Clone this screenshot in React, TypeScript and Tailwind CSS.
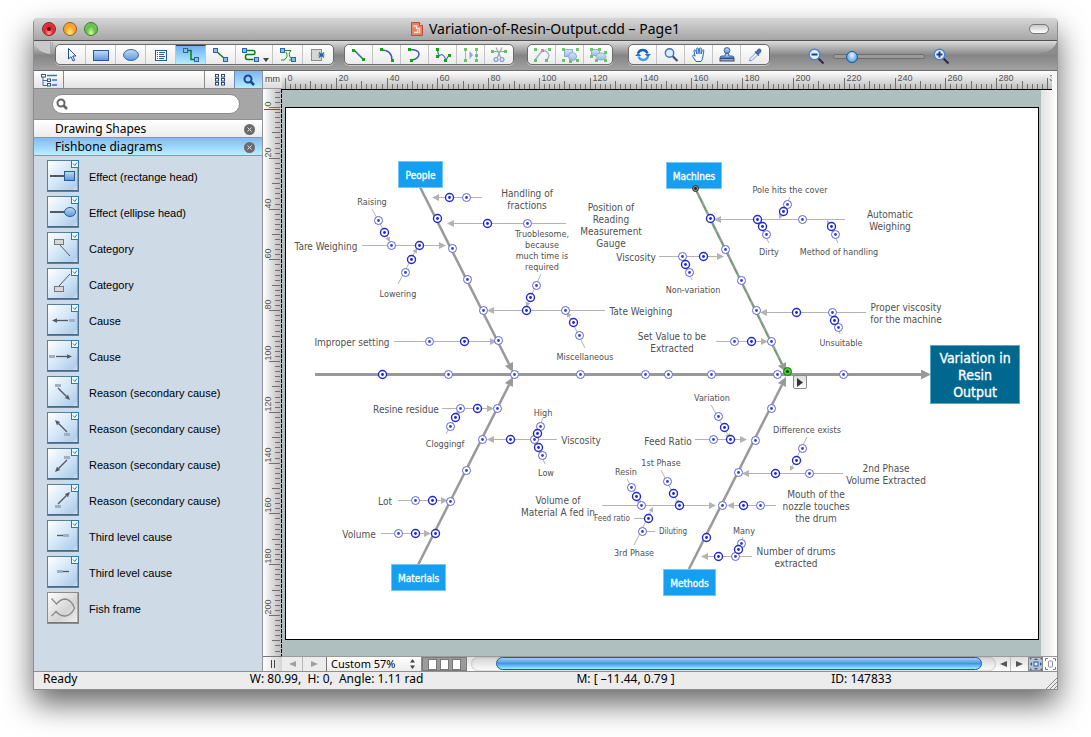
import type { ReactNode } from "react";
import clsx from "clsx";

const UI = "font-['Noto_Sans',sans-serif]";

// sheet rectangle, in window coordinates
const SHEET = { x: 286, y: 108, w: 752, h: 531 };

/* ---------- toolbar icons ---------- */

const Ico = ({ children }: { children: ReactNode }) => (
  <svg width="22" height="18" viewBox="0 0 22 18" fill="none">
    {children}
  </svg>
);

const Sq = ({ x, y }: { x: number; y: number }) => (
  <rect x={x} y={y} width="4" height="4" fill="#8fbce6" stroke="#2f62ad" />
);

const Dot = ({ x, y, c = "#12a512" }: { x: number; y: number; c?: string }) => (
  <rect x={x} y={y} width="3" height="3" fill={c} />
);

const Grads = () => (
  <svg width="0" height="0" className="absolute">
    <defs>
      <linearGradient id="blue" x1="0" y1="0" x2="0" y2="1">
        <stop offset="0" stopColor="#c3dcf5" />
        <stop offset="1" stopColor="#5a98dc" />
      </linearGradient>
      <linearGradient id="tile" x1="0" y1="0" x2="1" y2="1">
        <stop offset="0" stopColor="#fff" />
        <stop offset="0.5" stopColor="#d3e6f8" />
        <stop offset="0.85" stopColor="#b2cfea" />
        <stop offset="1" stopColor="#e3f0fb" />
      </linearGradient>
      <linearGradient id="tileGray" x1="0" y1="0" x2="1" y2="1">
        <stop offset="0" stopColor="#fff" />
        <stop offset="0.6" stopColor="#d4d4d4" />
        <stop offset="1" stopColor="#f2f2f2" />
      </linearGradient>
    </defs>
  </svg>
);

const drawTools = [
  {
    name: "Select",
    icon: (
      <Ico>
        <path d="M8.5 2.5v10.5l2.5-2.3 2 4.3 1.7-.8-2-4.2h3.3z" fill="#fff" stroke="#1d4f9e" />
      </Ico>
    ),
  },
  {
    name: "Rectangle",
    icon: (
      <Ico>
        <rect x="3.5" y="4.5" width="15" height="10" fill="url(#blue)" stroke="#2b579c" />
      </Ico>
    ),
  },
  {
    name: "Ellipse",
    icon: (
      <Ico>
        <ellipse cx="11" cy="9" rx="7.5" ry="5.5" fill="url(#blue)" stroke="#3a68a8" />
      </Ico>
    ),
  },
  {
    name: "Text box",
    icon: (
      <Ico>
        <rect x="5.5" y="4.5" width="11" height="10" fill="#fff" stroke="#2b579c" />
        <path d="M7 6.5h1M9 6.5h6M7 8.5h1M9 8.5h5M7 10.5h1M9 10.5h6M7 12.5h1M9 12.5h5" stroke="#3a5590" />
      </Ico>
    ),
  },
  {
    name: "Smart connector",
    active: true,
    icon: (
      <Ico>
        <path d="M7 4.5h4v9h4" stroke="#0e7a1c" strokeWidth="1.5" />
        <Sq x={3.5} y={2.5} />
        <Sq x={14.5} y={11.5} />
      </Ico>
    ),
  },
  {
    name: "Direct connector",
    icon: (
      <Ico>
        <path d="M6 5l9 8" stroke="#0e7a1c" strokeWidth="1.5" />
        <Sq x={3.5} y={2.5} />
        <Sq x={13.5} y={11.5} />
      </Ico>
    ),
  },
  {
    name: "Arc connector",
    menu: true,
    icon: (
      <Ico>
        <path d="M7 4.5h6q2 0 2 2t-2 2H7q-1.5 0-1.5 2.5t2 2.5h6" stroke="#0e7a1c" strokeWidth="1.5" />
        <Sq x={2.5} y={2.5} />
        <Sq x={14.5} y={11.5} />
      </Ico>
    ),
  },
  {
    name: "Tree connector",
    icon: (
      <Ico>
        <path d="M7 4.500h7M14 4.500q-4 4 1 9M4 14h3q5-3 2-8M12 14h3" stroke="#1f8f2c" />
        <Sq x={3.5} y={2.5} />
        <Sq x={14.5} y={11.5} />
      </Ico>
    ),
  },
  {
    name: "Clear connections",
    icon: (
      <Ico>
        <rect x="4.5" y="3.5" width="10" height="11" fill="#d4d6d4" stroke="#8b8f88" />
        <path d="M12 6.5l5 5M17 6.5l-5 5M11.5 9h6" stroke="#1768b0" strokeWidth="1.2" />
      </Ico>
    ),
  },
];

const pathTools = [
  {
    name: "Line",
    icon: (
      <Ico>
        <path d="M6 4l9 9" stroke="#3064b0" strokeWidth="1.5" />
        <Dot x={4} y={3} />
        <Dot x={14} y={12} />
      </Ico>
    ),
  },
  {
    name: "Arc",
    icon: (
      <Ico>
        <path d="M5 4q11 0 11 10" stroke="#3a5fae" strokeWidth="1.5" />
        <Dot x={4} y={2} />
        <Dot x={15} y={13} />
      </Ico>
    ),
  },
  {
    name: "Curve",
    icon: (
      <Ico>
        <path d="M5 3.5q10 0 10 4.5t-7 6" stroke="#3a5fae" strokeWidth="1.5" />
        <Dot x={4} y={2} />
        <Dot x={6} y={13} />
      </Ico>
    ),
  },
  {
    name: "Bezier",
    icon: (
      <Ico>
        <path d="M5 3l2 7q4-4 7 4l3-5M7 10H5" stroke="#4a6fb8" strokeWidth="1.2" />
        <Dot x={4} y={2} />
        <Dot x={4} y={9} />
        <Dot x={12} y={13} />
        <Dot x={16} y={8} />
      </Ico>
    ),
  },
  {
    name: "Mirror",
    icon: (
      <Ico>
        <g opacity="0.6">
          <path d="M5.5 4v10M16.5 4v10" stroke="#5f8fc0" />
          <path d="M9.5 5v8l3.5-4z" fill="#3f74c4" />
          <Dot x={4} y={2} />
          <Dot x={4} y={13} />
          <Dot x={15} y={2} />
          <Dot x={15} y={8} />
          <Dot x={15} y={13} />
        </g>
      </Ico>
    ),
  },
  {
    name: "Cut",
    icon: (
      <Ico>
        <g opacity="0.65">
          <path d="M3 5.5h16" stroke="#2aa83a" />
          <Dot x={3} y={4} />
          <Dot x={16} y={4} />
          <path d="M14 1.5L9 12M8 1.5L13 12" stroke="#777f8c" strokeWidth="1.3" />
          <circle cx="8" cy="13.5" r="1.9" stroke="#5278bd" strokeWidth="1.3" />
          <circle cx="14" cy="13.5" r="1.9" stroke="#5278bd" strokeWidth="1.3" />
        </g>
      </Ico>
    ),
  },
];

const groupTools = [
  {
    name: "Edit points",
    icon: (
      <Ico>
        <g opacity="0.6">
          <path d="M4 14l7-9q6-1 7 5-.5 3-3 4" stroke="#5e88c4" strokeWidth="1.5" />
          <path d="M6 3.500h12" stroke="#9ed3a2" strokeDasharray="2 2" />
          <Dot x={3} y={2} />
          <Dot x={3} y={13} />
          <Dot x={17} y={2} />
          <Dot x={14} y={13} />
          <Dot x={10} y={3} c="#e22c2c" />
        </g>
      </Ico>
    ),
  },
  {
    name: "Group",
    icon: (
      <Ico>
        <g opacity="0.6">
          <rect x="5.5" y="3.5" width="8" height="7" fill="url(#blue)" stroke="#4c7ec0" />
          <circle cx="13.5" cy="10.5" r="4" fill="url(#blue)" stroke="#4c7ec0" />
          <Dot x={3} y={2} />
          <Dot x={3} y={13} />
          <Dot x={17} y={2} />
          <Dot x={17} y={13} />
          <Dot x={10} y={14} />
        </g>
      </Ico>
    ),
  },
  {
    name: "Ungroup",
    icon: (
      <Ico>
        <g opacity="0.6">
          <rect x="4.5" y="3.5" width="8" height="6" fill="url(#blue)" stroke="#4c7ec0" />
          <ellipse cx="14" cy="10.5" rx="5" ry="3.5" fill="url(#blue)" stroke="#4c7ec0" />
          <Dot x={3} y={2} />
          <Dot x={11} y={2} />
          <Dot x={3} y={9} />
          <Dot x={17} y={5} />
          <Dot x={8} y={13} />
          <Dot x={17} y={13} />
        </g>
      </Ico>
    ),
  },
];

const viewTools = [
  {
    name: "Refresh",
    icon: (
      <Ico>
        <path d="M6 7.5a5 5 0 0 1 9.500 0" stroke="#1462bd" strokeWidth="2.4" />
        <path d="M16 10.5a5 5 0 0 1-9.500 0" stroke="#3f9be6" strokeWidth="2.4" />
        <path d="M12.5 8h6.500L16 11zM9.500 10h-6.500L6 7z" fill="#1e78d0" />
      </Ico>
    ),
  },
  {
    name: "Zoom",
    icon: (
      <Ico>
        <path d="M12.5 10l5 5" stroke="#45506e" strokeWidth="2.2" />
        <circle cx="9.5" cy="7" r="4.2" fill="#dcebfb" stroke="#3f74bd" strokeWidth="1.4" />
      </Ico>
    ),
  },
  {
    name: "Pan",
    icon: (
      <Ico>
        <path
          d="M8 15.5L4.8 10.600q-.6-1.300.5-1.600.8 0 1.700 1.200L6 4.800q0-1 .8-1 .7 0 1 1L9 8 8.700 3q0-1 .8-1t1 1l.5 4.700.6-5q.1-.9.9-.9t.8 1L13 8l1.300-3.600q.3-.8 1-.6t.5 1.200L14.800 11q-.3 2.500-1.800 4.500z"
          fill="#f4f9ff"
          stroke="#2666b8"
        />
      </Ico>
    ),
  },
  {
    name: "Stamp",
    icon: (
      <Ico>
        <circle cx="11" cy="4.5" r="2.900" fill="url(#blue)" stroke="#3a5f9a" />
        <path d="M9.5 7.5h3l.5 2.500h3q2 0 2 2h-14q0-2 2-2h3z" fill="url(#blue)" stroke="#3a5f9a" />
        <rect x="4" y="12.5" width="14" height="2.500" fill="#8ea6c8" stroke="#3d4e70" />
      </Ico>
    ),
  },
  {
    name: "Eyedropper",
    icon: (
      <Ico>
        <path d="M5.5 15l.7-2.600 6-6 2 2-6 6z" fill="#e4effb" stroke="#7d9cc8" />
        <path d="M11 5.5l4 4M12.500 6.500q1.500-3.500 3.300-3.300 1.500.8.800 2.300-.7 1.300-2.600 2.500z" fill="#4c78bd" stroke="#3c62a4" strokeWidth="1.3" />
      </Ico>
    ),
  },
];

type Tool = { name: string; icon: ReactNode; active?: boolean; menu?: boolean };

const ToolGroup = ({ tools, wide = false }: { tools: Tool[]; wide?: boolean }) => (
  <div className="flex h-[21px] overflow-hidden rounded-[5px] border border-[#6b6b6b] bg-linear-to-b from-white to-[#ebebeb] shadow-[0_1px_0_#c9c9c9]">
    {tools.map((t) => (
      <button
        key={t.name}
        aria-label={t.name}
        className={clsx(
          "flex h-full shrink-0 items-center justify-center border-r border-[#c4c4c4] last:border-r-0",
          t.menu ? "w-[37px]" : wide ? "w-[30px]" : "w-[28px]",
          t.active && "border-t border-t-[#2b2f9d] bg-linear-to-b from-[#6fb0f0] to-[#b5efff]"
        )}
      >
        {t.icon}
        {t.menu && (
          <svg width="7" height="18" viewBox="0 0 7 18">
            <path d="M1 12h6l-3 4z" fill="#444" />
          </svg>
        )}
      </button>
    ))}
  </div>
);

const ZoomGlass = ({ plus = false }: { plus?: boolean }) => (
  <svg width="17" height="17" viewBox="0 0 17 17">
    <path d="M10 10l5.500 5.500" stroke="#2b2550" strokeWidth="2" />
    <circle cx="6.5" cy="6.5" r="5.300" fill="#e2effc" stroke="#4c83cc" strokeWidth="1.4" />
    <path d={plus ? "M3.500 6.500h6M6.500 3.500v6" : "M3.500 6.500h6"} stroke="#1c3f86" strokeWidth="2" />
  </svg>
);

/* ---------- window chrome ---------- */

const TitleBar = () => (
  <header className="flex h-[23px] items-center border-b border-[#515151] bg-linear-to-b from-[#d6d6d6] to-[#a6a6a6] px-2">
    <div className="flex w-24 gap-[7px]">
      <button aria-label="Close" className="flex size-[14px] items-center justify-center rounded-full border border-[#8a1d1d] bg-radial-[at_50%_85%] from-[#ff9a9a] via-[#e3232f] to-[#c9606a]">
        <span className="size-1 rounded-full bg-[#6d0a10]" />
      </button>
      <button aria-label="Minimize" className="size-[14px] rounded-full border border-[#9c5a1a] bg-radial-[at_50%_85%] from-[#fff27a] via-[#f8a52c] to-[#e9a066]" />
      <button aria-label="Zoom window" className="size-[14px] rounded-full border border-[#3c7a2a] bg-radial-[at_50%_85%] from-[#d4ff9a] via-[#67bd4a] to-[#8ccb7c]" />
    </div>
    <div className="flex flex-1 items-center justify-center gap-[6px]">
      <svg width="12" height="14" viewBox="0 0 12 14">
        <path d="M.5.5h8l3 3v10H.5z" fill="#e8825f" stroke="#c9473d" />
        <path d="M8.500.5v3h3" fill="#fbe4da" stroke="#c9473d" />
        <path d="M2.500 4h3v2.500h3V11M3 10.500h3.500V8" fill="none" stroke="#fbe4da" strokeWidth="1.4" />
      </svg>
      <h1 className="text-[14px] leading-4 whitespace-nowrap text-black">Variation-of-Resin-Output.cdd – Page1</h1>
    </div>
    <div className="flex w-24 justify-end">
      <button aria-label="Toggle toolbar" className="h-[10px] w-5 rounded-full border border-[#777] bg-linear-to-b from-[#c9c9c9] to-white" />
    </div>
  </header>
);

const Toolbar = () => (
  <div className="relative flex h-[30px] items-center border-b border-[#6a6a6a] bg-linear-to-b from-[#dcdcdc] via-[#858585] to-[#a2a2a2] pb-[2px] pl-[21px]">
    <svg width="20" height="14" viewBox="0 0 20 14" className="absolute top-0 left-0">
      <path d="M0 0h17v13Q3 12 0 0z" fill="#c9c9c9" />
      <path d="M16.500 1v12M18.500 1v12" stroke="#a8a8a8" />
    </svg>
    <svg width="22" height="14" viewBox="0 0 22 14" className="absolute top-0 right-0">
      <path d="M22 0q-3 12-22 13h22z" fill="#8c8c8c" />
    </svg>
    <ToolGroup tools={drawTools} wide />
    <div className="w-[10px]" />
    <ToolGroup tools={pathTools} />
    <div className="w-[13px]" />
    <ToolGroup tools={groupTools} />
    <div className="w-[15px]" />
    <ToolGroup tools={viewTools} />
    <div className="flex items-center gap-2 pt-1 pl-[38px]">
      <button aria-label="Zoom out">
        <ZoomGlass />
      </button>
      <input
        type="range"
        aria-label="Zoom level"
        min={0}
        max={100}
        defaultValue={15}
        className="h-[5px] w-[92px] appearance-none rounded-full border border-[#6d6d6d] bg-[#9b9b9b] [&::-webkit-slider-thumb]:size-3 [&::-webkit-slider-thumb]:appearance-none [&::-webkit-slider-thumb]:rounded-full [&::-webkit-slider-thumb]:border [&::-webkit-slider-thumb]:border-[#1b4f9d] [&::-webkit-slider-thumb]:bg-radial-[at_50%_30%] [&::-webkit-slider-thumb]:from-[#e8f5ff] [&::-webkit-slider-thumb]:to-[#2a86e4]"
      />
      <button aria-label="Zoom in">
        <ZoomGlass plus />
      </button>
    </div>
  </div>
);

/* ---------- library sidebar ---------- */

const rod = "#55585c";
const Pill = ({ x, y }: { x: number; y: number }) => <rect x={x} y={y} width="6" height="3" fill="#9fb0c2" />;
const ArrowLine = ({ x1, y1, x2, y2, size = 5 }: { x1: number; y1: number; x2: number; y2: number; size?: number }) => {
  const a = Math.atan2(y2 - y1, x2 - x1);
  const bx = x2 - Math.cos(a) * size;
  const by = y2 - Math.sin(a) * size;
  const hx = -Math.sin(a) * size * 0.45;
  const hy = Math.cos(a) * size * 0.45;
  return (
    <g>
      <path d={`M${x1} ${y1}L${bx} ${by}`} stroke={rod} strokeWidth="1.3" />
      <path d={`M${x2} ${y2}L${bx + hx} ${by + hy}L${bx - hx} ${by - hy}z`} fill={rod} />
    </g>
  );
};

const shapes: { label: string; art: ReactNode; plain?: boolean }[] = [
  {
    label: "Effect (rectange head)",
    art: (
      <>
        <path d="M3 16h15" stroke={rod} strokeWidth="2" />
        <rect x="17.5" y="11.5" width="10" height="9" fill="url(#blue)" stroke="#2b579c" />
      </>
    ),
  },
  {
    label: "Effect (ellipse head)",
    art: (
      <>
        <path d="M3 16h15" stroke={rod} strokeWidth="2" />
        <ellipse cx="23" cy="16" rx="5.5" ry="4.5" fill="url(#blue)" stroke="#2b5f94" />
      </>
    ),
  },
  {
    label: "Category",
    art: (
      <>
        <path d="M12 12l11 12" stroke={rod} />
        <rect x="7.5" y="7.5" width="9" height="5" fill="#d8d8d8" stroke="#777" />
      </>
    ),
  },
  {
    label: "Category",
    art: (
      <>
        <path d="M12 18L23 6" stroke={rod} />
        <rect x="7.5" y="18.5" width="9" height="5" fill="#d8d8d8" stroke="#777" />
      </>
    ),
  },
  { label: "Cause", art: (<><ArrowLine x1={21} y1={16.5} x2={5} y2={16.5} /><Pill x={22} y={15} /></>) },
  { label: "Cause", art: (<><ArrowLine x1={9} y1={16.5} x2={25} y2={16.5} /><Pill x={2} y={15} /></>) },
  { label: "Reason (secondary cause)", art: (<><ArrowLine x1={11} y1={12} x2={23} y2={24} /><Pill x={8} y={8} /></>) },
  { label: "Reason (secondary cause)", art: (<><ArrowLine x1={20} y1={20} x2={8} y2={8} /><Pill x={17} y={21} /></>) },
  { label: "Reason (secondary cause)", art: (<><ArrowLine x1={20} y1={12} x2={8} y2={24} /><Pill x={17} y={8} /></>) },
  { label: "Reason (secondary cause)", art: (<><ArrowLine x1={11} y1={20} x2={23} y2={8} /><Pill x={8} y={21} /></>) },
  { label: "Third level cause", art: (<><path d="M10 15.500h6" stroke={rod} strokeWidth="1.3" /><Pill x={16} y={14} /></>) },
  { label: "Third level cause", art: (<><path d="M16 15.500h6" stroke={rod} strokeWidth="1.3" /><Pill x={10} y={14} /></>) },
  {
    label: "Fish frame",
    plain: true,
    art: <path d="M4.500 6.500l5 5.500q4-5 9-5 6 1 9 9-3 7-9 8-6 0-9.500-4.500l-4.500 4.500" fill="none" stroke="#8a8a8a" strokeWidth="1.3" />,
  },
];

const CloseMark = () => (
  <svg width="11" height="11" viewBox="0 0 11 11">
    <circle cx="5.5" cy="5.5" r="5.5" fill="#6b6b6b" />
    <path d="M3.500 3.500l4 4M7.500 3.500l-4 4" stroke="#e4e4e4" />
  </svg>
);

const LibraryTitle = ({ title, active = false }: { title: string; active?: boolean }) => (
  <div
    className={clsx(
      "flex h-[18px] items-center justify-between border-b border-[#8f969b] pr-[7px] pl-[21px]",
      active ? "bg-linear-to-b from-[#82baf4] to-[#b8f0ff]" : "bg-linear-to-b from-white to-[#ececec]"
    )}
  >
    <h2 className="text-xs leading-4">{title}</h2>
    <button aria-label={`Close ${title}`} className="pt-px">
      <CloseMark />
    </button>
  </div>
);

const Sidebar = () => (
  <aside className="w-[229px] shrink-0 border-r border-[#8f969b] bg-[#cedae6]">
    <div className="flex h-[18px] border-b border-[#8a8a8a] bg-linear-to-b from-white to-[#e4e4e4]">
      <button aria-label="Library tree" className="flex w-[30px] items-center justify-center border-r border-[#8a8a8a]">
        <svg width="18" height="14" viewBox="0 0 18 14" fill="none">
          <path d="M3 4v8.500h4M3 7.500h4" stroke="#4c6da8" />
          <rect x="1.5" y="1.5" width="4" height="2.5" fill="#fff" stroke="#28569f" />
          <rect x="7.5" y="6" width="3" height="2.5" fill="#fff" stroke="#28569f" />
          <rect x="7.5" y="10.5" width="3" height="2.5" fill="#fff" stroke="#28569f" />
          <path d="M7 2.500h10M12 7h5M12 12h5" stroke="#3b6fc0" strokeWidth="1.5" />
        </svg>
      </button>
      <div className="flex-1" />
      <button aria-label="Grid view" className="flex w-[30px] items-center justify-center border-l border-[#8a8a8a]">
        <svg width="12" height="12" viewBox="0 0 12 12" fill="#fff" stroke="#28467e">
          {[0.5, 4.5, 8.5].map((y) =>
            [1.5, 7.5].map((x) => <rect key={`${x}-${y}`} x={x} y={y} width="3" height="2.5" />)
          )}
        </svg>
      </button>
      <button aria-label="Search view" className="flex w-[28px] items-center justify-center border-l border-[#6d8fb5] bg-linear-to-b from-[#7fb6f2] to-[#b4ecff]">
        <svg width="12" height="12" viewBox="0 0 12 12" fill="none" stroke="#1d4690" strokeWidth="2">
          <circle cx="5" cy="5" r="3.5" />
          <path d="M7.500 7.500l3.500 3.500" strokeWidth="2.5" />
        </svg>
      </button>
    </div>
    <div className="border-b border-[#8f8f8f] bg-[#a6a6a6] py-[5px] pr-[22px] pl-[18px]">
      <div className="relative">
        <svg width="12" height="12" viewBox="0 0 12 12" fill="none" stroke="#666" strokeWidth="2" className="absolute top-1 left-1">
          <circle cx="5" cy="5" r="3.5" />
          <path d="M7.500 7.500l3.500 3.500" strokeWidth="2.5" />
        </svg>
        <input type="search" aria-label="Search shapes" className="block h-5 w-full rounded-full border border-[#8b8b8b] bg-white pr-2 pl-5 text-[11px] outline-none" />
      </div>
    </div>
    <LibraryTitle title="Drawing Shapes" />
    <LibraryTitle title="Fishbone diagrams" active />
    <ul className="flex flex-col gap-1 px-[13px] pt-1 font-['Liberation_Sans',sans-serif] text-[11px]">
      {shapes.map((s, i) => (
        <li key={i}>
          <button className="flex items-center gap-[10px] text-left leading-4">
            <svg width="32" height="32" viewBox="0 0 32 32">
              <rect x="0.5" y="0.5" width="31" height="31" fill={s.plain ? "url(#tileGray)" : "url(#tile)"} stroke={s.plain ? "#8b8b8b" : "#5d7d9c"} />
              <path d="M1 30.500h30V1" fill="none" stroke={s.plain ? "#777" : "#4a6a8a"} />
              {s.art}
              {!s.plain && (
                <>
                  <rect x="24.5" y="0.5" width="7" height="7" fill="#f2f9ff" stroke="#2e79ad" />
                  <path d="M26 3.500l1.700 2L30 2.500" fill="none" stroke="#2e79ad" />
                </>
              )}
            </svg>
            <span className="pt-px">{s.label}</span>
          </button>
        </li>
      ))}
    </ul>
  </aside>
);

/* ---------- rulers, 2 mm per tick ---------- */

const STEP = 5.08;

const HRuler = () => (
  <svg height="19" className="h-[19px] w-full font-['Liberation_Sans',sans-serif] text-[9px]" aria-label="Horizontal ruler">
    {Array.from({ length: 152 }, (_, i) => {
      const x = Math.round(3 + i * STEP) + 0.5;
      const len = i % 10 === 0 ? 11 : i % 5 === 0 ? 8 : 5;
      return (
        <g key={i}>
          <path d={`M${x} 18v${-len}`} stroke="#6f6f6f" />
          {i % 10 === 0 && (
            <text x={x + 2} y="10" fill="#555">
              {i * 2}
            </text>
          )}
        </g>
      );
    })}
    <line x1="0" x2="100%" y1="18.5" y2="18.5" stroke="#000" />
  </svg>
);

const VRuler = () => (
  <svg width="19" className="w-[19px] flex-1 font-['Liberation_Sans',sans-serif] text-[9px]" aria-label="Vertical ruler">
    {Array.from({ length: 111 }, (_, n) => {
      const i = n - 3;
      const y = Math.round(18 + i * STEP) + 0.5;
      const len = i % 10 === 0 ? 11 : i % 5 === 0 ? 8 : 5;
      return (
        <g key={i}>
          <path d={`M17 ${y}h${-len}`} stroke="#6f6f6f" />
          {i % 10 === 0 && (
            <text transform={`translate(8 ${y - 1}) rotate(-90)`} fill="#555">
              {i * 2}
            </text>
          )}
        </g>
      );
    })}
    <path d="M1 20.500h16" stroke="#e21b1b" />
    <line x1="18.5" x2="18.5" y1="0" y2="100%" stroke="#000" strokeDasharray="4 1" />
  </svg>
);

/* ---------- fishbone diagram ---------- */

// x1, y1 -> x2, y2 with an arrow head at the second point
const causes: number[][] = [
  [482, 197.5, 432, 197.5],
  [566, 223.5, 447, 223.5],
  [362, 245.5, 446, 245.5],
  [605, 310.5, 487, 310.5],
  [394, 341.5, 497, 341.5],
  [845, 219.5, 714, 219.5],
  [659, 256.5, 724, 256.5],
  [866, 312.5, 760, 312.5],
  [716, 341.5, 768, 341.5],
  [442, 408.5, 494, 408.5],
  [557, 439.5, 487, 439.5],
  [398, 500.5, 448, 500.5],
  [381, 533.5, 431, 533.5],
  [695, 439.5, 747, 439.5],
  [843, 473.5, 742, 473.5],
  [776, 505.5, 727, 505.5],
  [602, 505.5, 716, 505.5],
  [752, 556.5, 701, 556.5],
];

const reasons: number[][] = [
  [372, 209, 390, 242],
  [398, 284, 417, 248],
  [541, 274, 526, 307],
  [585, 348, 567, 312],
  [790, 197, 779, 219],
  [769, 243, 757, 219],
  [838, 243, 827, 220],
  [692, 280, 682, 257],
  [840, 334, 832, 313],
  [446, 434, 460, 409],
  [543, 418, 534, 439],
  [545, 464, 534, 440],
  [711, 405, 730, 439],
  [807, 437, 790, 471],
  [627, 479, 641, 505],
  [661, 470, 679, 505],
  [634, 545, 653, 507],
  [743, 537, 735, 556],
];

const bones: number[][] = [
  [420, 187, 513, 372],
  [695, 188, 786, 372],
  [418, 565, 513, 377],
  [689, 569, 786, 377],
];

const strongNodes: number[][] = [
  [437, 218], [449, 197], [487, 223], [419, 245], [384, 232], [411, 259], [526, 310], [530, 297], [573, 322],
  [464, 341], [382, 374], [710, 218], [757, 219], [783, 211], [762, 226], [831, 226], [703, 256], [685, 264],
  [796, 312], [834, 320], [751, 341], [435, 533], [477, 408], [455, 417], [510, 439], [537, 433], [538, 447],
  [432, 500], [415, 533], [706, 537], [730, 439], [724, 427], [796, 460], [775, 473], [743, 505], [679, 505],
  [636, 496], [673, 493], [648, 518], [718, 556], [738, 549],
];

const weakNodes: number[][] = [
  [452, 248], [467, 279], [483, 310], [498, 340], [466, 197], [527, 223], [391, 245], [378, 220], [405, 272],
  [565, 310], [536, 285], [579, 335], [429, 341], [448, 374], [514, 374], [580, 374], [645, 374], [668, 374],
  [711, 374], [777, 374], [843, 374], [725, 249], [741, 280], [756, 310], [771, 341], [802, 219], [787, 204],
  [766, 234], [835, 234], [682, 256], [689, 272], [832, 312], [838, 327], [734, 341], [450, 501], [466, 470],
  [482, 439], [497, 408], [460, 408], [450, 426], [534, 439], [540, 426], [542, 455], [415, 500], [398, 533],
  [771, 408], [755, 440], [738, 472], [722, 505], [713, 439], [718, 416], [802, 448], [809, 473], [760, 505],
  [641, 505], [631, 487], [667, 481], [642, 531], [735, 556], [741, 543],
];

type Size = "lg" | "md" | "sm";

// centre x, centre y, text, size
const labels: [number, number, string, Size][] = [
  [372, 202, "Raising", "md"],
  [326, 247, "Tare Weighing", "lg"],
  [398, 294, "Lowering", "md"],
  [527, 200, "Handling of\nfractions", "lg"],
  [611, 226, "Position of\nReading\nMeasurement\nGauge", "lg"],
  [542, 251, "Truoblesome,\nbecause\nmuch time is\nrequired", "md"],
  [641, 312, "Tate Weighing", "lg"],
  [585, 357, "Miscellaneous", "md"],
  [352, 343, "Improper setting", "lg"],
  [790, 190, "Pole hits the cover", "md"],
  [890, 221, "Automatic\nWeighing", "lg"],
  [769, 252, "Dirty", "md"],
  [839, 252, "Method of handling", "md"],
  [636, 258, "Viscosity", "lg"],
  [693, 290, "Non-variation", "md"],
  [906, 314, "Proper viscosity\nfor the machine", "lg"],
  [841, 343, "Unsuitable", "md"],
  [672, 343, "Set Value to be\nExtracted", "lg"],
  [406, 410, "Resine residue", "lg"],
  [445, 444, "Cloggingf", "md"],
  [543, 413, "High", "md"],
  [581, 441, "Viscosity", "lg"],
  [546, 473, "Low", "md"],
  [558, 507, "Volume of\nMaterial A fed in", "lg"],
  [385, 502, "Lot", "lg"],
  [359, 535, "Volume", "lg"],
  [712, 398, "Variation", "md"],
  [668, 442, "Feed Ratio", "lg"],
  [807, 430, "Difference exists", "md"],
  [886, 475, "2nd Phase\nVolume Extracted", "lg"],
  [661, 463, "1st Phase", "md"],
  [626, 472, "Resin", "md"],
  [816, 507, "Mouth of the\nnozzle touches\nthe drum", "lg"],
  [612, 519, "Feed ratio", "sm"],
  [673, 532, "Diluting", "sm"],
  [634, 553, "3rd Phase", "md"],
  [744, 531, "Many", "md"],
  [796, 558, "Number of drums\nextracted", "lg"],
];

// left, top, width, height
const heads: [number, number, number, number, string][] = [
  [398, 161, 45, 27, "People"],
  [666, 162, 56, 27, "Machines"],
  [391, 564, 55, 27, "Materials"],
  [663, 569, 53, 27, "Methods"],
];

const Arrow = ({ p, color, width, head }: { p: number[]; color: string; width: number; head: number }) => {
  const [x1, y1, x2, y2] = p;
  const a = Math.atan2(y2 - y1, x2 - x1);
  const bx = x2 - Math.cos(a) * head;
  const by = y2 - Math.sin(a) * head;
  const hx = -Math.sin(a) * head * 0.5;
  const hy = Math.cos(a) * head * 0.5;
  return (
    <>
      <path d={`M${x1} ${y1}L${bx} ${by}`} stroke={color} strokeWidth={width} />
      <path d={`M${x2} ${y2}L${bx + hx} ${by + hy}L${bx - hx} ${by - hy}z`} fill={color} />
    </>
  );
};

const Sheet = () => (
  <div className="relative h-[533px] w-[754px] shrink-0 border border-black bg-white font-['DejaVu_Sans_Condensed','DejaVu_Sans',sans-serif]">
    <svg width={SHEET.w} height={SHEET.h} viewBox={`${SHEET.x} ${SHEET.y} ${SHEET.w} ${SHEET.h}`} className="block">
      {causes.map((p, i) => (
        <Arrow key={i} p={p} color="#b3b3b3" width={1} head={7} />
      ))}
      {reasons.map((p, i) => (
        <Arrow key={i} p={p} color="#b3b3b3" width={1} head={5} />
      ))}
      <path d="M634 518.500h14M642 531.500h13" stroke="#b3b3b3" />
      <Arrow p={[315, 374.5, 931, 374.5]} color="#999" width={3} head={10} />
      {bones.map((p, i) => (
        <Arrow key={i} p={p} color="#999" width={2.5} head={9} />
      ))}
      <path d="M695 188l88 179" stroke="#43b043" strokeDasharray="6 4" />
      {weakNodes.map(([x, y], i) => (
        <g key={i}>
          <circle cx={x + 0.5} cy={y + 0.5} r="4" fill="#fff" stroke="#5a63dd" />
          <circle cx={x + 0.5} cy={y + 0.5} r="1.4" fill="#3a3fd0" />
        </g>
      ))}
      {strongNodes.map(([x, y], i) => (
        <g key={i}>
          <circle cx={x + 0.5} cy={y + 0.5} r="4" fill="#fff" stroke="#2029d0" strokeWidth="1.4" />
          <circle cx={x + 0.5} cy={y + 0.5} r="1.4" fill="#1a24cc" />
        </g>
      ))}
      {heads.map(([x, y, w, h, name]) => (
        <rect key={name} x={x + 0.5} y={y + 0.5} width={w - 1} height={h - 1} fill="#169ff0" stroke="#73c6f8" />
      ))}
      <rect x="930.5" y="345.5" width="89" height="58" fill="#00688f" stroke="#5ba5bd" />
      <circle cx="695.5" cy="188.5" r="3" fill="#8a8a8a" stroke="#333" />
      <circle cx="695.5" cy="188.5" r="1.4" fill="#222" />
      <circle cx="787.5" cy="371.5" r="4" fill="#4ecb3a" stroke="#177a12" />
      <circle cx="787.5" cy="371.5" r="1.6" fill="#0c4a0c" />
    </svg>
    {heads.map(([x, y, w, h, name]) => (
      <div
        key={name}
        className="absolute flex items-center justify-center pt-[2px] text-[10px] text-white [-webkit-text-stroke:0.3px_white]"
        style={{ left: x - SHEET.x, top: y - SHEET.y, width: w, height: h }}
      >
        {name}
      </div>
    ))}
    <div
      className="absolute flex items-center justify-center text-center text-[14px] leading-[17px] whitespace-pre text-white [-webkit-text-stroke:0.3px_white]"
      style={{ left: 930 - SHEET.x, top: 346 - SHEET.y, width: 90, height: 58 }}
    >
      {"Variation in\nResin\nOutput"}
    </div>
    {labels.map(([x, y, text, size], i) => (
      <div
        key={i}
        className={clsx(
          "absolute -translate-x-1/2 -translate-y-1/2 text-center whitespace-pre text-[#505050]",
          size === "lg" && "text-[10px] leading-[12px]",
          size === "md" && "text-[9px] leading-[11px]",
          size === "sm" && "text-[8px] leading-[10px]"
        )}
        style={{ left: x - SHEET.x, top: y - SHEET.y }}
      >
        {text}
      </div>
    ))}
    <button
      aria-label="Smart actions"
      className="absolute flex size-[14px] items-center justify-center rounded-[2px] border border-[#8a8a8a] bg-linear-to-b from-[#ddd] to-white"
      style={{ left: 793 - SHEET.x, top: 375 - SHEET.y }}
    >
      <svg width="6" height="9" viewBox="0 0 6 9">
        <path d="M0 0l6 4.500L0 9z" fill="#333" />
      </svg>
    </button>
  </div>
);

/* ---------- bottom controls ---------- */

const Tri = ({ left = false, color = "#555" }: { left?: boolean; color?: string }) => (
  <svg width="7" height="8" viewBox="0 0 7 8">
    <path d={left ? "M7 1v6L0 4z" : "M0 1v6l7-3z"} fill={color} />
  </svg>
);

const BottomBar = () => (
  <div className="flex h-[15px] border-t border-[#9a9a9a] bg-linear-to-b from-[#dedede] to-white">
    <button aria-label="Previous page" className="flex w-[21px] items-center justify-center border-r border-[#b5b5b5] bg-[#ececec]">
      <Tri left color="#a0a0a0" />
    </button>
    <button aria-label="Next page" className="flex w-[24px] items-center justify-center border-r border-[#777] bg-[#ececec]">
      <Tri color="#a0a0a0" />
    </button>
    <div className="relative w-[95px] border-r border-[#888] bg-linear-to-b from-white to-[#ececec]">
      <select aria-label="Zoom" className="block h-[14px] w-full appearance-none bg-transparent pl-1 text-[11px] leading-[14px] outline-none">
        <option>Custom 57%</option>
      </select>
      <svg width="5" height="12" viewBox="0 0 5 12" className="pointer-events-none absolute top-px right-[6px]">
        <path d="M0 4.500h5L2.500 1zM0 7.500h5L2.500 11z" fill="#444" />
      </svg>
    </div>
    <div className="flex w-[45px] items-center justify-center gap-[3px] border border-[#7c7c7c] bg-[#9b9b9b]">
      {[1, 2, 3].map((n) => (
        <button key={n} aria-label={`Page layout ${n}`} className="h-[11px] w-[9px] border border-[#777] bg-white" />
      ))}
    </div>
    <div className="ml-1 flex-1 rounded-full bg-linear-to-b from-[#d2d2d2] to-white pr-[14px] pl-[25px] shadow-[inset_0_0_2px_#999]">
      <div
        role="scrollbar"
        aria-label="Horizontal scroll"
        aria-controls="sheet"
        aria-valuenow={50}
        className="h-[13px] rounded-full border border-[#2152c0] bg-linear-to-b from-[#a9ccf5] via-[#3f97ea] to-[#9af0ff]"
      />
    </div>
    <button aria-label="Scroll left" className="flex w-[15px] items-center justify-center border-r border-[#bbb]">
      <Tri left />
    </button>
    <button aria-label="Scroll right" className="flex w-[17px] items-center justify-center">
      <Tri />
    </button>
    <button aria-label="Fit page" className="flex w-[15px] items-center justify-center border border-[#888] bg-[#b9c3cf]">
      <svg width="12" height="12" viewBox="0 0 12 12" fill="#2e5f9e">
        <rect x="4" y="4" width="4" height="4" fill="#d8f0ff" stroke="#2e5f9e" />
        <path d="M6 0l2 2H4zM6 12l2-2H4zM0 6l2-2v4zM12 6l-2-2v4zM0 0h2L0 2zM12 0h-2l2 2zM0 12h2l-2-2zM12 12h-2l2-2z" />
      </svg>
    </button>
    <button aria-label="Actual size" className="flex w-[14px] items-center justify-center bg-white">
      <svg width="11" height="12" viewBox="0 0 11 12" fill="none" stroke="#5c83b5">
        <path d="M.5 3V.5H3M8 .5h2.500V3M.5 9v2.500H3M8 11.500h2.500V9" />
        <rect x="3.5" y="3" width="4" height="6" rx="1" stroke="#8a8f98" />
      </svg>
    </button>
  </div>
);

const Editor = () => (
  <main className="flex min-w-0 flex-1">
    <div className="flex w-[19px] shrink-0 flex-col bg-linear-to-r from-white to-[#b9b9b9]">
      <div className="flex h-[18px] items-center justify-center border-b border-[#9a9a9a] bg-linear-to-b from-white to-[#dcdcdc] font-['Liberation_Sans',sans-serif] text-[9px] text-[#444]">
        mm
      </div>
      <VRuler />
      <div className="flex h-[15px] items-center justify-center gap-[2px] border-t border-[#777] bg-linear-to-r from-white to-[#d5d5d5]">
        <span className="h-2 w-px bg-[#444]" />
        <span className="h-2 w-px bg-[#444]" />
      </div>
    </div>
    <div className="flex min-w-0 flex-1 flex-col">
      <div className="flex bg-[#f6f6f6] pr-[5px]">
        <div className="min-w-0 flex-1 bg-linear-to-b from-white to-[#b9b9b9]">
          <HRuler />
        </div>
      </div>
      <div className="flex flex-1">
        <div id="sheet" className="min-w-0 flex-1 overflow-hidden bg-[#afbfbf] pt-[17px] pb-4 pl-[3px]">
          <Sheet />
        </div>
        <div className="w-4 shrink-0 bg-linear-to-r from-[#e2e2e2] to-white" />
      </div>
      <BottomBar />
    </div>
  </main>
);

const StatusBar = () => (
  <footer className="relative grid h-[18px] grid-cols-[207fr_327fr_255fr_226fr] items-center border-t border-[#8f8f8f] bg-[#ececec] pb-1 pl-[9px] text-xs leading-[14px] whitespace-pre">
    <span>Ready</span>
    <span>{"W: 80.99,  H: 0,  Angle: 1.11 rad"}</span>
    <span>M: [ –11.44, 0.79 ]</span>
    <span>ID: 147833</span>
    <svg width="12" height="12" viewBox="0 0 12 12" className="absolute right-0 bottom-0" stroke="#888">
      <path d="M1 12L12 1M5 12l7-7M9 12l3-3" />
    </svg>
  </footer>
);

export default function App() {
  return (
    <div className={clsx("min-h-screen bg-white px-[33px] pt-[18px] pb-12 text-black", UI)}>
      <Grads />
      <div className="overflow-hidden rounded-t-[5px] border-x border-b border-[#8e8e8e] shadow-[0_14px_30px_rgba(0,0,0,0.6)]">
        <TitleBar />
        <Toolbar />
        <div className="flex">
          <Sidebar />
          <Editor />
        </div>
        <StatusBar />
      </div>
    </div>
  );
}
